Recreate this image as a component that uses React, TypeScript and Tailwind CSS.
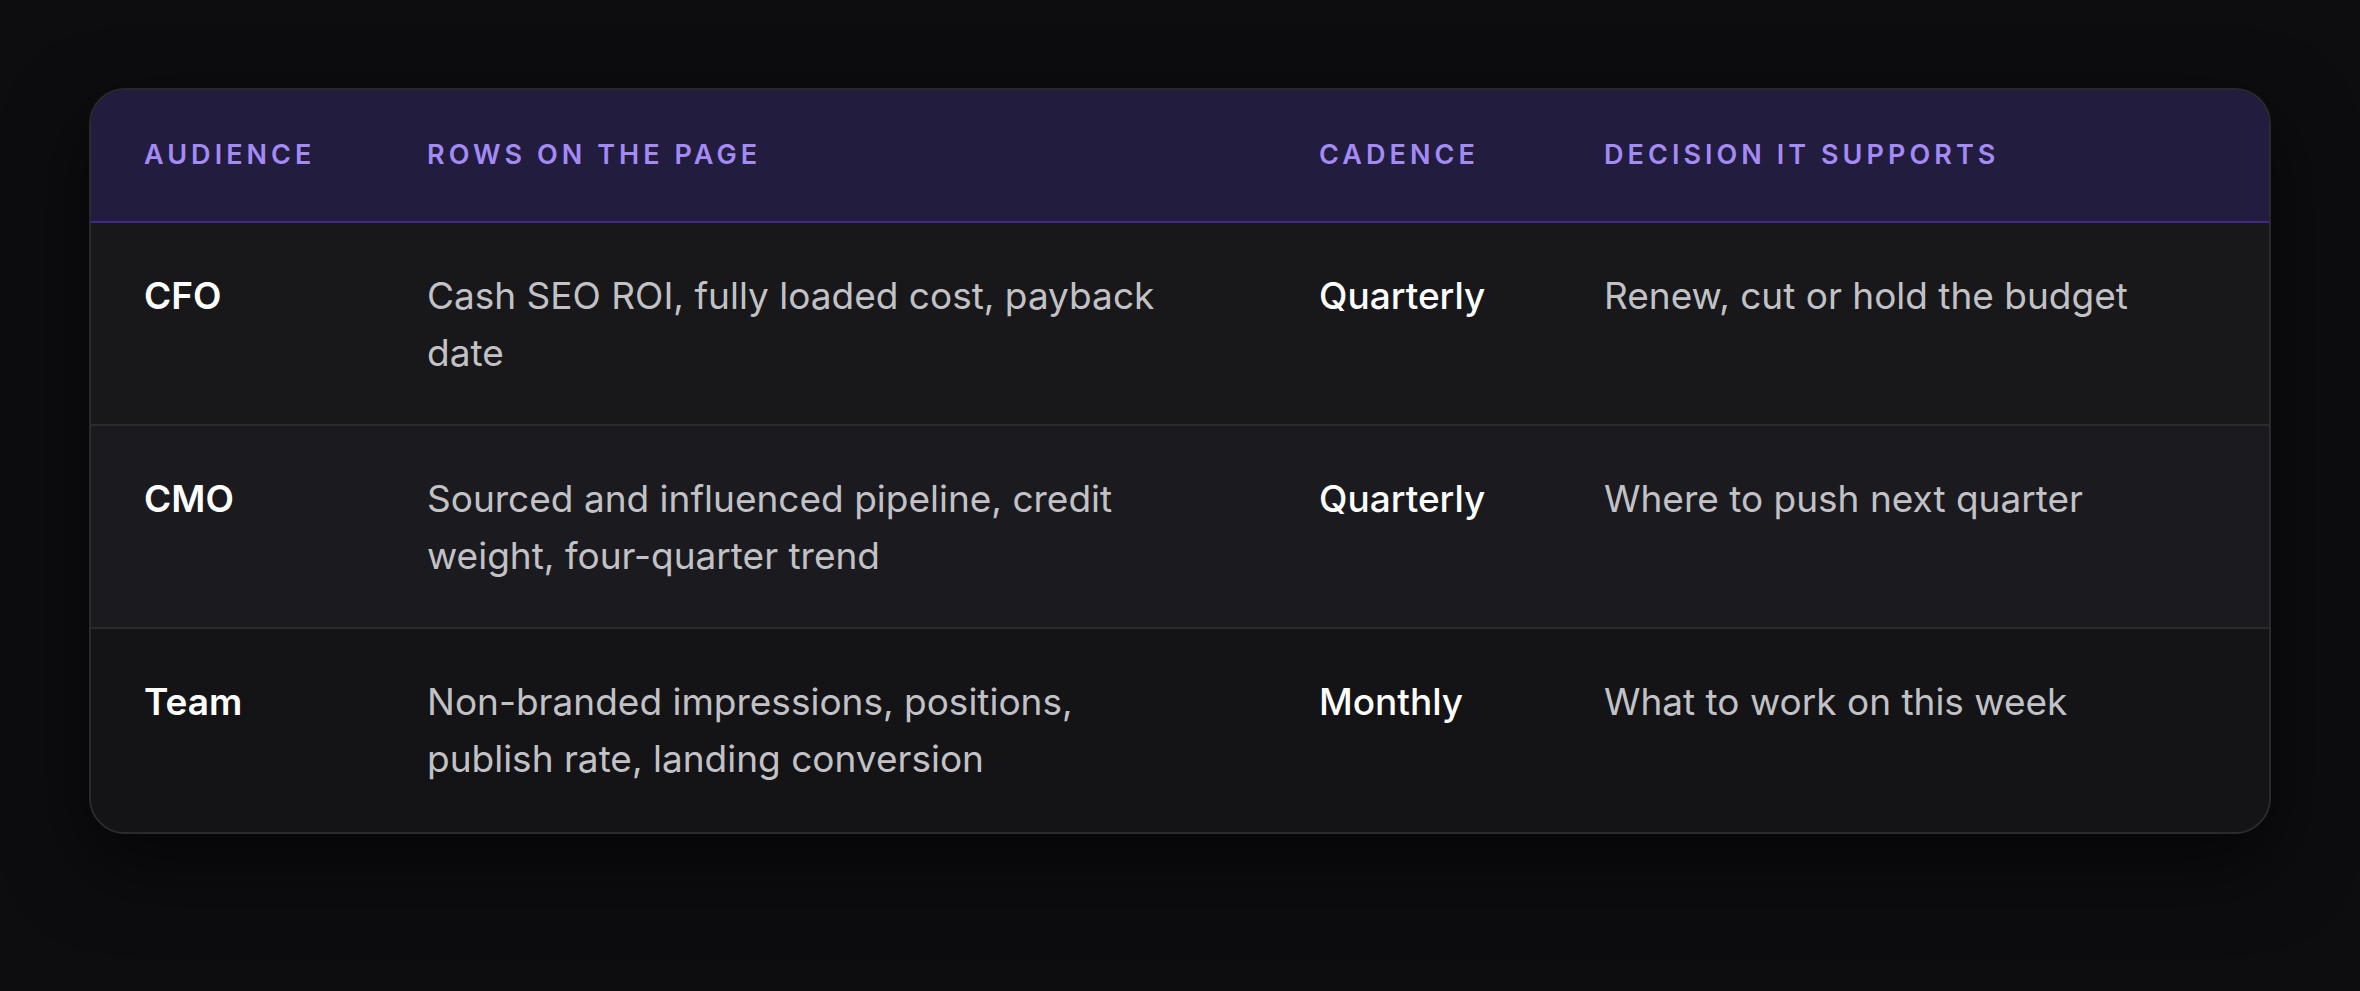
import React from 'react';

const rows = [
  { who: 'CFO', what: 'Cash SEO ROI, fully loaded cost, payback date', cadence: 'Quarterly', decision: 'Renew, cut or hold the budget', bg: 'bg-[#18181b] border-b-2 border-[#29292d]' },
  { who: 'CMO', what: 'Sourced and influenced pipeline, credit weight, four-quarter trend', cadence: 'Quarterly', decision: 'Where to push next quarter', bg: 'bg-[#1b1b1f] border-b-2 border-[#29292d]' },
  { who: 'Team', what: 'Non-branded impressions, positions, publish rate, landing conversion', cadence: 'Monthly', decision: 'What to work on this week', bg: 'bg-[#141417]' },
];

const cols = 'grid grid-cols-[283px_892px_285px_1fr] px-[53px]';

export default function App() {
  return (
    <div className="min-h-[991px] bg-[#0d0d10] px-[89px] py-[88px] font-[Inter]">
      <div className="rounded-[36px] border-2 border-[#2a2a2e] overflow-hidden bg-[#18181b] shadow-[0_30px_80px_rgba(0,0,0,0.6)]">
        <div className={`${cols} h-[133px] items-center bg-[#221c3f] border-b-2 border-[#40298a]`}>
          {['Audience', 'Rows on the page', 'Cadence', 'Decision it supports'].map((h) => (
            <div key={h} className="text-[27px] font-semibold uppercase tracking-[0.15em] text-[#a48af5]">{h}</div>
          ))}
        </div>
        {rows.map((r) => (
          <div key={r.who} className={`${cols} h-[203px] pt-[44px] text-[37px] leading-[57px] ${r.bg}`}>
            <div className="font-semibold text-white">{r.who}</div>
            <div className="text-[#c2c2c6] pr-[130px]">{r.what}</div>
            <div className="font-medium text-white">{r.cadence}</div>
            <div className="text-[#c2c2c6]">{r.decision}</div>
          </div>
        ))}
      </div>
    </div>
  );
}
